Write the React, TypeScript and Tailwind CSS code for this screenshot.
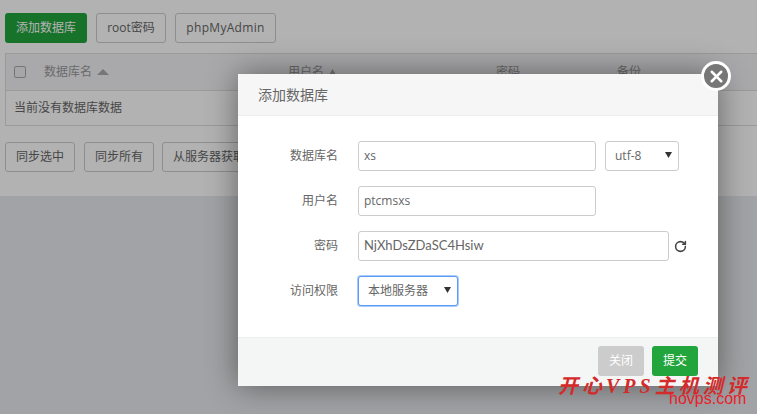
import { RotateCw, X } from 'lucide-react';

const cjk = "font-['Open_Sans','Noto_Sans_CJK_SC',sans-serif]";

function PageButton({ label, className = '' }: { label: string; className?: string }) {
  return (
    <button className={`h-[30px] shrink-0 rounded-[3px] border border-[#ccc] bg-white px-[10px] text-xs text-[#666] ${className}`}>
      {label}
    </button>
  );
}

function SortArrow({ width }: { width: number }) {
  return (
    <svg width={width} height="6" viewBox="0 0 12 6" className="ml-[5px]" preserveAspectRatio="none">
      <path d="M0 6L6 0l6 6z" fill="#aaa" />
    </svg>
  );
}

function SelectBox({ value, width, focused }: { value: string; width: string; focused?: boolean }) {
  return (
    <div
      className={`flex h-[30px] items-center justify-between rounded-[3px] border bg-white pl-[9px] pr-[6px] text-xs text-[#666] ${width} ${
        focused ? 'border-[#5b9bf5] shadow-[0_0_0_1px_#a9cbfb]' : 'border-[#ccc]'
      }`}
    >
      <span>{value}</span>
      <svg width="7" height="6" viewBox="0 0 7 6" className="mb-[2px]">
        <path d="M0 0h7L3.5 6z" fill="#333" />
      </svg>
    </div>
  );
}

function FormRow({ label, children }: { label: string; children: React.ReactNode }) {
  return (
    <div className="flex h-[30px] items-center">
      <label className="mr-5 w-[100px] text-right text-xs text-[#666]">{label}</label>
      {children}
    </div>
  );
}

function TextBox({ value, width, narrow }: { value: string; width: string; narrow?: boolean }) {
  return (
    <div
      className={`flex h-[30px] items-center rounded-[3px] border border-[#ccc] bg-white px-[5px] text-[#666] ${width} ${
        narrow ? "font-['Lato',sans-serif] text-[13px]" : 'text-xs'
      }`}
    >
      {value}
    </div>
  );
}

export default function App() {
  return (
    <div className={`relative h-[414px] w-[757px] overflow-hidden bg-[#e9eaee] ${cjk}`}>
      {/* Page behind the dialog */}
      <div className="h-[196px] bg-white pl-[5px] pt-[13px]">
        <div className="flex gap-[9px]">
          <button className="h-[30px] w-[82px] rounded-[3px] bg-[#22a53d] text-xs text-white">添加数据库</button>
          <PageButton label="root密码" className="w-[70px] !px-0" />
          <PageButton label="phpMyAdmin" className="w-[101px] !px-0 tracking-[0.3px]" />
        </div>

        <div className="mt-[10px] h-[73px] border border-r-0 border-[#ddd] text-xs">
          <div className="flex h-[37px] items-center border-b border-[#ddd] bg-[#f2f2f6] pl-[8px] text-[#999]">
            <span className="h-[12px] w-[12px] rounded-[2px] border border-[#aaa] bg-[#eee]" />
            <span className="ml-[18px] flex w-[244px] items-center">
              数据库名
              <SortArrow width={12} />
            </span>
            <span className="flex w-[208px] items-center">
              用户名
              <SortArrow width={7} />
            </span>
            <span className="w-[121px]">密码</span>
            <span>备份</span>
          </div>
          <div className="flex h-[34px] items-center pl-[8px] text-[#666]">当前没有数据库数据</div>
        </div>

        <div className="mt-[16px] flex gap-[9px]">
          <PageButton label="同步选中" />
          <PageButton label="同步所有" />
          <PageButton label="从服务器获取" className="-ml-px" />
        </div>
      </div>

      {/* Backdrop */}
      <div className="absolute inset-0 bg-black/30" />

      {/* Dialog */}
      <div className="absolute left-[238px] top-[74px] flex h-[312px] w-[480px] flex-col bg-white shadow-[0_0_30px_rgba(0,0,0,0.45)]">
        <div className="flex h-[42px] shrink-0 items-center border-b border-[#eee] bg-[#f6f6f6] pl-5 text-sm text-[#666]">
          添加数据库
        </div>

        <div className="flex flex-1 flex-col gap-[15px] pt-[25px]">
          <FormRow label="数据库名">
            <TextBox value="xs" width="w-[238px]" />
            <div className="ml-[9px]">
              <SelectBox value="utf-8" width="w-[74px]" />
            </div>
          </FormRow>
          <FormRow label="用户名">
            <TextBox value="ptcmsxs" width="w-[238px]" />
          </FormRow>
          <FormRow label="密码">
            <TextBox value="NjXhDsZDaSC4Hsiw" width="w-[311px]" narrow />
            <RotateCw size={13} strokeWidth={2.8} className="ml-[5px] text-[#444]" />
          </FormRow>
          <FormRow label="访问权限">
            <SelectBox value="本地服务器" width="w-[100px]" focused />
          </FormRow>
        </div>

        <div className="flex h-[49px] shrink-0 items-start justify-end gap-2 border-t border-[#eee] bg-[#f4f6f6] pr-5 pt-2">
          <button className="h-[30px] w-[46px] rounded-[3px] bg-[#ccc] text-xs text-white">关闭</button>
          <button className="h-[30px] w-[46px] rounded-[3px] bg-[#22a53d] text-xs text-white">提交</button>
        </div>

        <button className="absolute right-[-13px] top-[-13px] flex h-[30px] w-[30px] items-center justify-center rounded-full border-[3px] border-white bg-[#777]">
          <X size={19} strokeWidth={3.2} className="text-white" />
        </button>
      </div>

      {/* Watermark */}
      <div className="absolute left-[558px] top-[374px] whitespace-nowrap font-['Liberation_Serif','Noto_Sans_CJK_SC',serif] text-[20px] font-bold italic leading-[24px] tracking-[4px] text-[#d42a2a]">
        开心VPS主机测评
      </div>
      <div className="absolute left-[669px] top-[390px] font-['Liberation_Sans',sans-serif] text-[16px] leading-[18px] text-[#e8212b]">
        hovps.com
      </div>
    </div>
  );
}
